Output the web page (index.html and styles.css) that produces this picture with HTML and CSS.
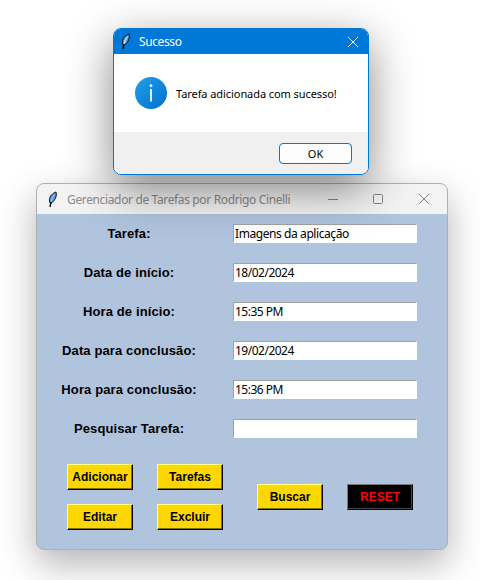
FILE: index.html
```html
<!DOCTYPE html>
<html lang="pt-BR">
<head>
<meta charset="utf-8">
<title>Gerenciador de Tarefas</title>
<link rel="stylesheet" href="styles.css">
</head>
<body>
<main class="window">
  <header class="titlebar">
    <svg class="feather" width="12" height="17" viewBox="0 0 12 17"><path d="M3 12C1.2 8 3.500 3 9 1c1.200 4-1 8.500-4.500 11z" fill="#4f9be8" stroke="#111" stroke-width="1"/><path d="M7.500 3.500Q5 7 4 11" fill="none" stroke="#9dccfa" stroke-width="1"/><path d="M4 11L3 16" fill="none" stroke="#000" stroke-width="1.300"/></svg>
    <span class="caption">Gerenciador de Tarefas por Rodrigo Cinelli</span>
    <svg class="controls" width="104" height="12" viewBox="0 0 104 12"><path d="M1 6.5h10"/><rect x="46.5" y="1.5" width="9" height="9" rx="1"/><path d="M92 1l10 10M102 1L92 11"/></svg>
  </header>
  <form class="form">
    <label class="row"><span class="label">Tarefa:</span><span class="field wide">Imagens da aplicação</span></label>
    <label class="row"><span class="label">Data de início:</span><span class="field">18/02/2024</span></label>
    <label class="row"><span class="label">Hora de início:</span><span class="field">15:35 PM</span></label>
    <label class="row"><span class="label">Data para conclusão:</span><span class="field">19/02/2024</span></label>
    <label class="row"><span class="label">Hora para conclusão:</span><span class="field">15:36 PM</span></label>
    <label class="row"><span class="label">Pesquisar Tarefa:</span><span class="field"></span></label>
  </form>
  <div class="actions">
    <div class="grid">
      <button class="btn" type="button">Adicionar</button>
      <button class="btn" type="button">Tarefas</button>
      <button class="btn" type="button">Editar</button>
      <button class="btn" type="button">Excluir</button>
    </div>
    <button class="btn" type="button">Buscar</button>
    <button class="btn reset" type="button">RESET</button>
  </div>
</main>
<section class="dialog" role="dialog">
  <header class="dialog-title">
    <svg class="feather" width="12" height="17" viewBox="0 0 12 17"><path d="M3 12C1.200 8 3.500 3 9 1c1.200 4-1 8.500-4.500 11z" fill="#4f9be8" stroke="#111" stroke-width="1"/><path d="M7.500 3.500Q5 7 4 11" fill="none" stroke="#d0e8ff" stroke-width="1.200"/><path d="M4 11L3 16" fill="none" stroke="#000" stroke-width="1.300"/></svg>
    <span class="caption">Sucesso</span>
    <svg class="close" width="12" height="12" viewBox="0 0 12 12"><path d="M1 1l10 10M11 1L1 11"/></svg>
  </header>
  <div class="message">
    <svg width="32" height="32" viewBox="0 0 32 32"><defs><linearGradient id="info" x1="0" y1="0" x2="1" y2="1"><stop offset="0" stop-color="#22a0e6"/><stop offset="1" stop-color="#0070d0"/></linearGradient></defs><circle cx="16" cy="16" r="16" fill="url(#info)"/><circle cx="16" cy="8.700" r="1.4" fill="#fff"/><path d="M16 12v12.500" stroke="#fff" stroke-width="1.8"/></svg>
    <span class="text">Tarefa adicionada com sucesso!</span>
  </div>
  <footer class="footer"><button class="ok" type="button">OK</button></footer>
</section>
</body>
</html>
```
FILE: styles.css
```css
* { box-sizing: border-box; }
body {
  margin: 0;
  width: 480px;
  height: 580px;
  overflow: hidden;
  position: relative;
  background: #fff;
  color: #000;
  font-family: "Noto Sans", "Open Sans", sans-serif;
  font-size: 12px;
}
.window {
  position: absolute;
  left: 36px;
  top: 183px;
  width: 412px;
  height: 367px;
  border: 1px solid #adb0b4;
  border-radius: 8px;
  background: #b0c4de;
  overflow: hidden;
  box-shadow: 0 14px 36px rgba(0, 0, 0, .3);
}
.titlebar {
  height: 30px;
  padding: 0 16px 0 10px;
  display: flex;
  align-items: center;
  background: #f3f3f3;
  color: #8c8c8c;
}
.caption { white-space: nowrap; }
.titlebar .caption { margin-left: 8px; letter-spacing: -.36px; }
.controls { margin-left: auto; fill: none; stroke: #858585; }
.form { padding-top: 10px; }
.row {
  display: flex;
  height: 19px;
  margin-bottom: 20px;
  align-items: center;
}
.label {
  width: 184px;
  margin-right: 12px;
  text-align: center;
  font: bold 13px/19px "Liberation Sans", Arial, sans-serif;
  letter-spacing: .12px;
}
.field {
  width: 184px;
  height: 19px;
  padding-left: 1px;
  border: 1px solid #fff;
  border-top-color: #a0a0a0;
  border-left-color: #a0a0a0;
  background: #fff;
  line-height: 18px;
  letter-spacing: -.5px;
  white-space: nowrap;
}
.wide { letter-spacing: -.42px; }
.actions {
  display: flex;
  align-items: center;
  padding: 6px 0 0 30px;
}
.grid {
  display: grid;
  grid-template-columns: 66px 66px;
  gap: 14px 24px;
  margin-right: 34px;
}
.btn {
  width: 66px;
  height: 26px;
  padding: 0;
  border: 1px solid #000;
  border-top-color: #ffff80;
  border-left-color: #ffff80;
  border-radius: 0;
  background: #ffd700;
  box-shadow: inset -1px -1px #806c00;
  color: #000;
  font: bold 12px/23px "Liberation Sans", Arial, sans-serif;
}
.reset {
  margin-left: 24px;
  background: #000;
  color: #f00;
  border-top-color: #777;
  border-left-color: #777;
  box-shadow: inset -1px -1px #444;
}
.dialog {
  position: absolute;
  left: 113px;
  top: 28px;
  width: 256px;
  height: 147px;
  border: 1px solid #0078d7;
  border-radius: 8px;
  background: #fff;
  overflow: hidden;
  box-shadow: 0 14px 46px rgba(0, 0, 0, .48);
}
.dialog-title {
  height: 25px;
  padding: 0 9px 0 6px;
  display: flex;
  align-items: center;
  background: #0078d7;
  color: #fff;
}
.dialog-title .caption { margin-left: 7px; letter-spacing: -.4px; }
.close { margin-left: auto; fill: none; stroke: #fff; }
.message {
  height: 78px;
  padding-left: 21px;
  display: flex;
  align-items: center;
}
.text { margin-left: 9px; font-size: 11px; letter-spacing: -.07px; white-space: nowrap; }
.footer {
  height: 42px;
  padding: 11px 16px 0 0;
  background: #f0f0f0;
  text-align: right;
}
.ok {
  display: block;
  margin-left: auto;
  width: 73px;
  height: 21px;
  padding: 0;
  border: 1px solid #0078d4;
  border-radius: 4px;
  background: #fdfdfd;
  color: #000;
  font: 11px/19px "Noto Sans", "Open Sans", sans-serif;
}
```
